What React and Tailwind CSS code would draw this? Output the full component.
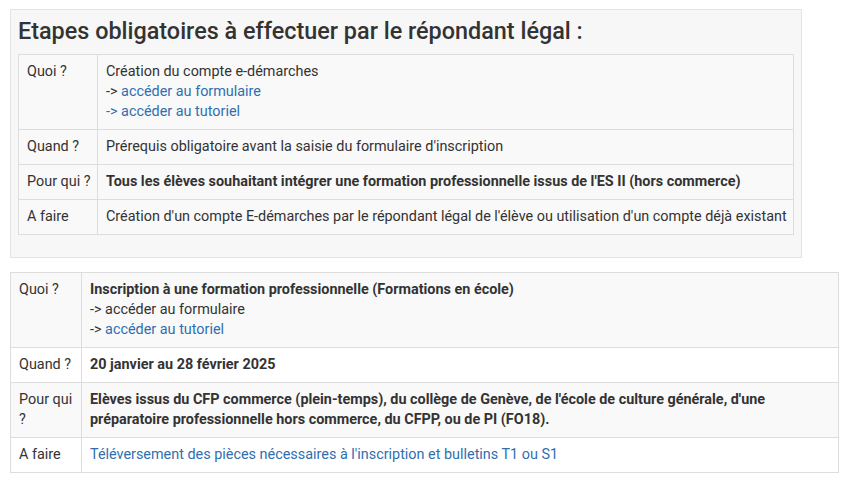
import React from "react";

const link = "text-[#2f6fb0]";

function Row({ label, children, labelW, striped, nowrap }) {
  const wrap = nowrap ? "whitespace-nowrap" : "";
  return (
    <tr className={striped === undefined ? "" : striped ? "bg-[#f9f9f9]" : "bg-white"}>
      <td className={`align-top px-2 py-[7px] border border-[#dddddd] ${labelW} ${wrap}`}>
        {label}
      </td>
      <td className={`align-top px-2 py-[7px] border border-[#dddddd] ${wrap}`}>{children}</td>
    </tr>
  );
}

export default function App() {
  return (
    <div
      className="bg-white text-[#333333] text-[14.4px] leading-[20px] px-[10px] pt-[9px]"
      style={{ fontFamily: "Roboto, 'Liberation Sans', sans-serif" }}
    >
      {/* Encadré répondant légal */}
      <div className="w-[792px] bg-[#f7f7f7] border border-[#e3e3e3] px-[7px] pt-[6px] pb-[22px]">
        <h3 className="text-[23.4px] leading-[30px] font-medium text-[#333333] mb-[8px]">
          Etapes obligatoires à effectuer par le répondant légal :
        </h3>
        <table className="w-[776px] table-fixed border-collapse bg-[#f9f9f9]">
          <tbody>
            <Row label="Quoi ?" labelW="w-[79px]" nowrap>
              Création du compte e-démarches
              <br />
              -&gt; <a className={link}>accéder au formulaire</a>
              <br />
              <a className={link}>-&gt; accéder au tutoriel</a>
            </Row>
            <Row label="Quand ?" labelW="w-[79px]" nowrap>
              Prérequis obligatoire avant la saisie du formulaire d'inscription
            </Row>
            <Row label="Pour qui ?" labelW="w-[79px]" nowrap>
              <strong className="font-bold">
                Tous les élèves souhaitant intégrer une formation professionnelle issus de l'ES II (hors commerce)
              </strong>
            </Row>
            <Row label="A faire" labelW="w-[79px]" nowrap>
              Création d'un compte E-démarches par le répondant légal de l'élève ou utilisation d'un compte déjà existant
            </Row>
          </tbody>
        </table>
      </div>

      {/* Tableau inscription */}
      <table className="w-[829px] table-fixed border-collapse mt-[14px]">
        <tbody>
          <Row label="Quoi ?" labelW="w-[71px]" striped>
            <strong className="font-bold">
              Inscription à une formation professionnelle (Formations en école)
            </strong>
            <br />
            -&gt; accéder au formulaire
            <br />
            -&gt; <a className={link}>accéder au tutoriel</a>
          </Row>
          <Row label="Quand ?" labelW="w-[71px]" striped={false}>
            <strong className="font-bold">20 janvier au 28 février 2025</strong>
          </Row>
          <Row label="Pour qui ?" labelW="w-[71px]" striped>
            <strong className="font-bold">
              Elèves issus du CFP commerce (plein-temps), du collège de Genève, de l'école de culture générale, d'une
              <br />
              préparatoire professionnelle hors commerce, du CFPP, ou de PI (FO18).
            </strong>
          </Row>
          <Row label="A faire" labelW="w-[71px]" striped={false}>
            <a className={link}>
              Téléversement des pièces nécessaires à l'inscription et bulletins T1 ou S1
            </a>
          </Row>
        </tbody>
      </table>
    </div>
  );
}
